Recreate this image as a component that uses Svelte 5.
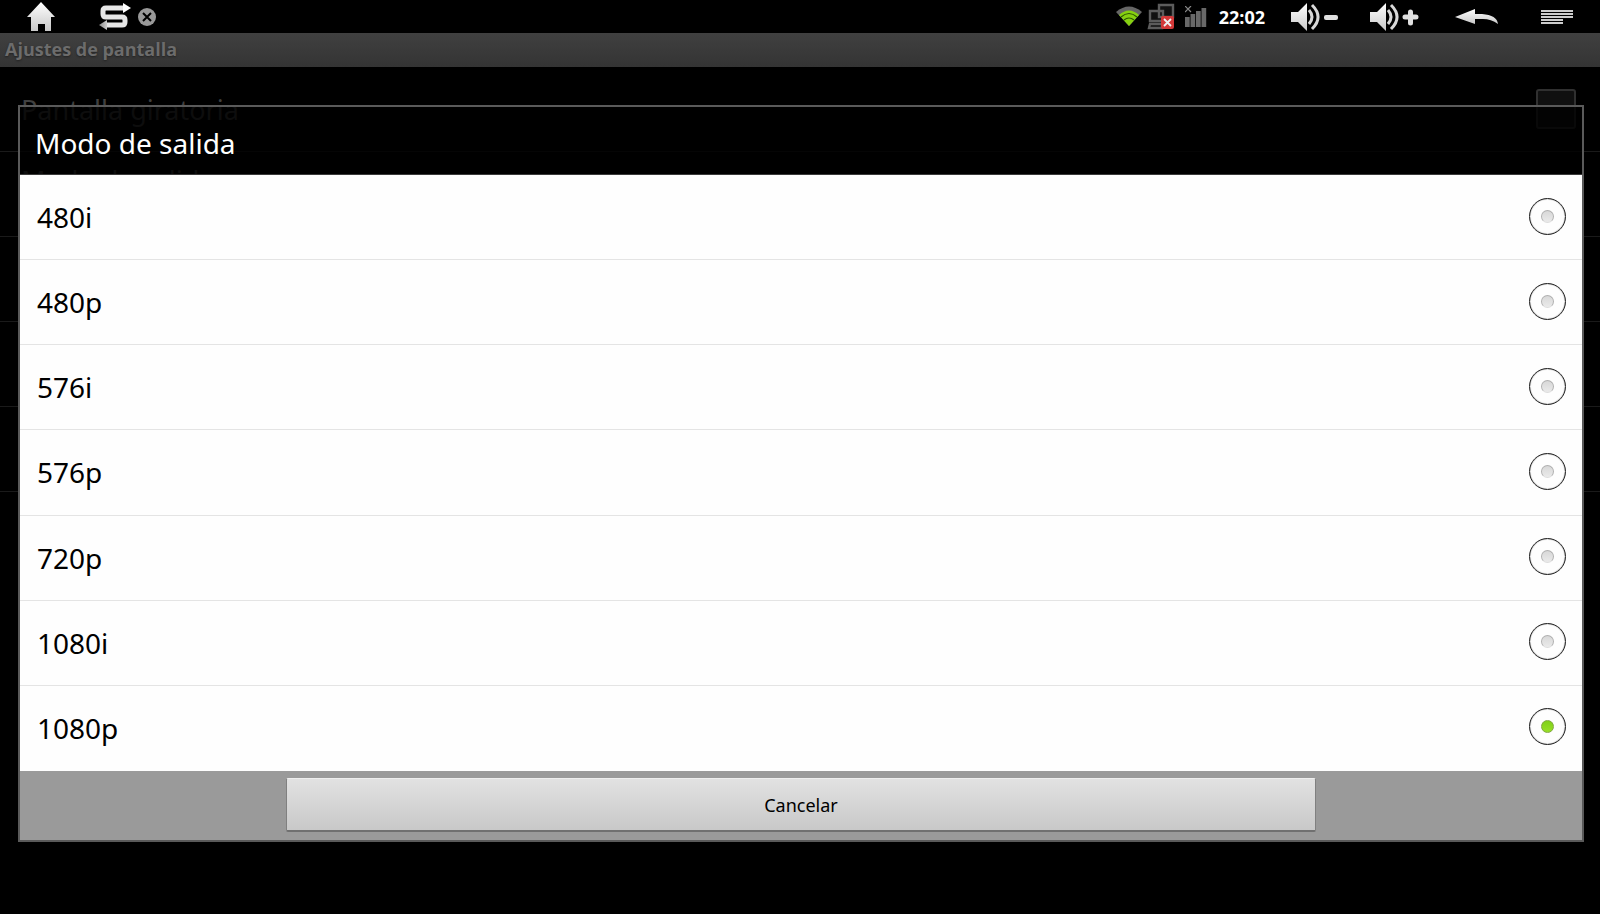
<script>
	const modes = ['480i', '480p', '576i', '576p', '720p', '1080i', '1080p'];
	let selected = $state('1080p');
	let rotate = $state(false);
</script>

{#snippet speaker()}
	<path d="M1 10h7l9-9v28l-9-9H1z" fill="url(#metal)" />
	<path d="M19 8q6 7 0 14" fill="none" stroke="#d8d8d8" stroke-width="3" />
	<path d="M22 3q12 12 0 24" fill="none" stroke="#d8d8d8" stroke-width="3" />
{/snippet}

<div class="screen">
	<header class="status">
		<button class="home" aria-label="Inicio">
			<svg width="28" height="30" viewBox="0 0 28 30">
				<defs>
					<linearGradient id="metal" x1="0" y1="0" x2="0" y2="1">
						<stop offset="0" stop-color="#fff" />
						<stop offset="1" stop-color="#c8c8c8" />
					</linearGradient>
				</defs>
				<path d="M14 0 28 15h-4v14h-6v-7h-7v7H4V15H0z" fill="url(#metal)" />
			</svg>
		</button>
		<button class="switch" aria-label="Cambiar">
			<svg width="33" height="28" viewBox="0 0 33 28">
				<defs>
					<linearGradient id="bend" x1="0" y1="0" x2="1" y2="0">
						<stop offset="0" stop-color="#888" />
						<stop offset="1" stop-color="#ccc" />
					</linearGradient>
				</defs>
				<path d="M26 5H8Q5 5 5 8v3q0 3 3 3h16q3 0 3 3v2q0 3-3 3H8" fill="none" stroke="#e6e6e6" stroke-width="5" />
				<path d="M25 0l8 5-8 5z" fill="#fff" />
				<path d="M9 17v10l-8-5z" fill="url(#bend)" />
			</svg>
		</button>
		<button class="close" aria-label="Cerrar">
			<svg width="18" height="18" viewBox="0 0 18 18">
				<circle cx="9" cy="9" r="9" fill="#999" />
				<path d="M5 5l8 8M13 5l-8 8" stroke="#000" stroke-width="2" />
			</svg>
		</button>

		<svg class="wifi" width="26" height="21" viewBox="0 0 26 21">
			<path d="M0 6Q13-5 26 6L13 20z" fill="#666" />
			<path d="M3 9Q13 0 23 9L13 20z" fill="#86d010" />
			<path d="M5 11q8-7 16 0M8 14q5-4 10 0" fill="none" stroke="#2c5600" stroke-width="1.2" />
		</svg>
		<svg class="network" width="28" height="27" viewBox="0 0 28 27">
			<g fill="#111" stroke="#5c5c5c" stroke-width="2.4">
				<path d="M12 2h14v12H12zM3 8h13v10H3zM3 21h12v4H2z" />
			</g>
			<rect x="14" y="13" width="13" height="13" rx="2" fill="#d33838" />
			<path d="M17 16l7 7M24 16l-7 7" stroke="#eee" stroke-width="1.8" />
		</svg>
		<svg class="signal" width="22" height="22" viewBox="0 0 22 22">
			<path d="M0 11h4.700v10H0zM5.500 8h4.700v13H5.500zM11 5h4.700v16H11zM16.500 2h4.700v19h-4.700z" fill="#686868" />
			<path d="M0 0l6 6M6 0L0 6" stroke="#888" stroke-width="1.2" />
		</svg>
		<time>22:02</time>

		<button class="volume-down" aria-label="Bajar volumen">
			<svg width="50" height="30" viewBox="0 0 50 30">
				{@render speaker()}
				<rect x="34" y="13" width="14" height="5" rx="2" fill="#e0e0e0" />
			</svg>
		</button>
		<button class="volume-up" aria-label="Subir volumen">
			<svg width="50" height="30" viewBox="0 0 50 30">
				{@render speaker()}
				<path d="M36 15h11M41.500 10v11" stroke="#e0e0e0" stroke-width="5" stroke-linecap="round" />
			</svg>
		</button>
		<button class="back" aria-label="Atrás">
			<svg width="44" height="16" viewBox="0 0 44 16">
				<path d="M0 8 20 0v5h7q15 1 16 10-7-5-15-5h-8v5z" fill="url(#metal)" />
			</svg>
		</button>
		<button class="menu" aria-label="Menú">
			<svg width="32" height="14" viewBox="0 0 32 14">
				<path d="M0 0h32v2H0zM0 3h32v2H0zM0 6h32v2H0zM0 9h22v2H0zM0 12h22v2H0z" fill="#ccc" />
			</svg>
		</button>
	</header>

	<h1>Ajustes de pantalla</h1>

	<main>
		<label class="setting">
			<span>Pantalla giratoria</span>
			<input type="checkbox" bind:checked={rotate} />
		</label>
		<div class="setting top">Modo de salida</div>
		<div class="setting"></div>
		<div class="setting"></div>
		<div class="setting"></div>
	</main>

	<div class="dialog" role="dialog" aria-labelledby="dialog-title">
		<h2 id="dialog-title">Modo de salida</h2>
		<div class="modes">
			{#each modes as mode}
				<label>
					<span>{mode}</span>
					<input type="radio" name="mode" value={mode} bind:group={selected} />
				</label>
			{/each}
		</div>
		<footer>
			<button class="cancel">Cancelar</button>
		</footer>
	</div>
</div>

<style>
	:global(body) {
		margin: 0;
		background: #000;
	}

	.screen {
		position: relative;
		min-height: 100vh;
		background: #000;
		font-family: 'Noto Sans', 'Open Sans', sans-serif;
	}

	button {
		padding: 0;
		border: 0;
		background: none;
		font-family: inherit;
	}

	svg {
		display: block;
	}

	/* Status bar */
	.status {
		display: flex;
		align-items: center;
		height: 33px;
		padding: 0 27px;
	}

	.switch {
		margin-left: 43px;
	}

	.close {
		margin-left: 7px;
	}

	.wifi {
		margin-left: auto;
	}

	.network {
		margin-left: 5px;
	}

	.signal {
		margin-left: 10px;
	}

	time {
		margin-left: 12px;
		color: #fff;
		font: bold 18px 'Open Sans', sans-serif;
	}

	.volume-down {
		margin-left: 25px;
	}

	.volume-up {
		margin-left: 29px;
	}

	.back {
		margin-left: 36px;
	}

	.menu {
		margin-left: 42px;
	}

	h1 {
		margin: 0;
		padding: 0 5px 2px;
		background: linear-gradient(#404040, #343434);
		color: #6c6c6c;
		font: bold 18px/32px 'Open Sans', sans-serif;
		text-shadow: 0 1px 2px #222;
	}

	/* Settings behind the dialog */
	.setting {
		box-sizing: border-box;
		display: flex;
		align-items: center;
		justify-content: space-between;
		height: 85px;
		padding: 0 24px 0 21px;
		border-bottom: 1px solid #1a1a1a;
		color: #404040;
		font-size: 27px;
	}

	.setting.top {
		align-items: flex-start;
		padding-top: 10px;
	}

	.setting input {
		appearance: none;
		width: 40px;
		height: 40px;
		margin: 0;
		border: 2px solid #303030;
		border-radius: 3px;
		background: #101010;
	}

	/* Dialog */
	.dialog {
		position: absolute;
		inset: 105px 16px 72px 18px;
		display: flex;
		flex-direction: column;
		border: 2px solid #5a5a5a;
	}

	h2 {
		margin: 0;
		padding: 5px 15px 0;
		border-bottom: 1px solid #3a3a3a;
		background: rgba(0, 0, 0, 0.8);
		color: #fff;
		font-size: 28px;
		font-weight: normal;
		line-height: 62px;
	}

	.modes {
		flex: 1;
		display: flex;
		flex-direction: column;
		background: #fefefe;
	}

	.modes label {
		flex: 1;
		display: flex;
		align-items: center;
		justify-content: space-between;
		padding: 0 16px 2px 17px;
		border-bottom: 1px solid #e4e4e4;
		color: #000;
		font-size: 28px;
	}

	.modes span {
		padding-top: 2px;
	}

	.modes label:last-child {
		border-bottom-color: #fefefe;
	}

	.modes input {
		appearance: none;
		box-sizing: border-box;
		display: grid;
		place-items: center;
		width: 37px;
		height: 37px;
		margin: 0;
		border: 1px solid #222;
		border-radius: 50%;
		box-shadow: inset 0 0 1px #222;
	}

	.modes input::before {
		content: '';
		box-sizing: border-box;
		width: 13px;
		height: 13px;
		border: 1px solid #b0b0b0;
		border-bottom-color: #ddd;
		border-radius: 50%;
		background: linear-gradient(#d8d8d8, #eaeaea);
	}

	.modes input:checked::before {
		border-color: #80a840;
		background: linear-gradient(#80d018, #98e028);
	}

	footer {
		display: flex;
		justify-content: center;
		padding: 7px 0 8px;
		background: #9a9a9a;
	}

	.cancel {
		width: 66%;
		height: 54px;
		border: 1px solid #808080;
		border-top-color: #eee;
		border-bottom: 2px solid #707070;
		border-radius: 2px;
		background: linear-gradient(#e2e2e2, #c8c8c8);
		color: #000;
		font-size: 18px;
	}
</style>
